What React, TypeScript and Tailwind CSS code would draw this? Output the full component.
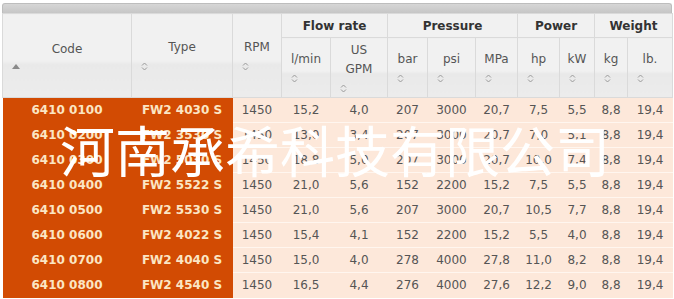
import React from "react";

const rows = [
  ["6410 0100", "FW2 4030 S", "1450", "15,2", "4,0", "207", "3000", "20,7", "7,5", "5,5", "8,8", "19,4"],
  ["6410 0200", "FW2 3530 S", "1450", "13,0", "3,4", "207", "3000", "20,7", "7,0", "5,1", "8,8", "19,4"],
  ["6410 0300", "FW2 5030 S", "1450", "18,8", "5,0", "207", "3000", "20,7", "10,0", "7,4", "8,8", "19,4"],
  ["6410 0400", "FW2 5522 S", "1450", "21,0", "5,6", "152", "2200", "15,2", "7,5", "5,5", "8,8", "19,4"],
  ["6410 0500", "FW2 5530 S", "1450", "21,0", "5,6", "207", "3000", "20,7", "10,5", "7,7", "8,8", "19,4"],
  ["6410 0600", "FW2 4022 S", "1450", "15,4", "4,1", "152", "2200", "15,2", "5,5", "4,0", "8,8", "19,4"],
  ["6410 0700", "FW2 4040 S", "1450", "15,0", "4,0", "278", "4000", "27,8", "11,0", "8,2", "8,8", "19,4"],
  ["6410 0800", "FW2 4540 S", "1450", "16,5", "4,4", "276", "4000", "27,6", "12,2", "9,0", "8,8", "19,4"],
];

const widths = [129, 101, 49, 49, 57, 40, 48, 42, 42, 35, 33, 45];

const SortIcon = () => (
  <svg width="7" height="9" viewBox="0 0 7 9" className="block">
    <path d="M1 3.5 L3.5 1 L6 3.5 M1 5.5 L3.5 8 L6 5.5" fill="none" stroke="#9a9a9a" strokeWidth="1" />
  </svg>
);

const AscIcon = () => (
  <svg width="8" height="5" viewBox="0 0 8 5" className="block">
    <path d="M0 5 L4 0 L8 5 Z" fill="#8a8a8a" />
  </svg>
);

const SubHead = ({ label, asc, span }: { label: React.ReactNode; asc?: boolean; span?: boolean }) => (
  <th
    rowSpan={span ? 2 : 1}
    className="border border-[#dadada] font-normal text-[#555] align-middle px-0 bg-[linear-gradient(#f1f1f1_0%,#f1f1f1_55%,#e9e9e9_60%,#ececec_100%)]"
  >
    <div className="leading-[19px] text-center px-1">{label}</div>
    <div className="pl-[9px] pt-[5px] pb-[2px]">{asc ? <AscIcon /> : <SortIcon />}</div>
  </th>
);

const GroupHead = ({ label, span }: { label: string; span: number }) => (
  <th
    colSpan={span}
    className="border border-[#dadada] bg-[#f1f1f1] font-bold text-[#333] h-[24px] text-center"
  >
    {label}
  </th>
);

export default function App() {
  return (
    <div className="w-[674px] h-[299px] bg-white overflow-hidden relative font-['DejaVu_Sans',sans-serif] text-[12px]">
      <div className="mx-[2px] mt-[3px] h-[10px] rounded-t-[3px] bg-[linear-gradient(#d6d6d6,#c6c6c6)] border border-b-0 border-[#bdbdbd]" />
      <table className="table-fixed border-collapse ml-[2px] w-[670px]">
        <colgroup>
          {widths.map((w, i) => (
            <col key={i} style={{ width: w }} />
          ))}
        </colgroup>
        <thead>
          <tr>
            <SubHead label="Code" asc span />
            <SubHead label="Type" span />
            <SubHead label="RPM" span />
            <GroupHead label="Flow rate" span={2} />
            <GroupHead label="Pressure" span={3} />
            <GroupHead label="Power" span={2} />
            <GroupHead label="Weight" span={2} />
          </tr>
          <tr className="h-[60px]">
            <SubHead label="l/min" />
            <SubHead label={<>US<br />GPM</>} />
            <SubHead label="bar" />
            <SubHead label="psi" />
            <SubHead label="MPa" />
            <SubHead label="hp" />
            <SubHead label="kW" />
            <SubHead label="kg" />
            <SubHead label="lb." />
          </tr>
        </thead>
        <tbody>
          {rows.map((r, i) => (
            <tr key={i} className="h-[25px]">
              {r.map((c, j) => (
                <td
                  key={j}
                  className={
                    j < 2
                      ? "bg-[#d24b03] text-[#fbe6c4] font-bold text-center p-0"
                      : "bg-[#fde8da] text-[#555] text-center p-0 border-t border-[#fff6ef]"
                  }
                >
                  {c}
                </td>
              ))}
            </tr>
          ))}
        </tbody>
      </table>
      <div className="absolute left-[60px] top-[121px] text-[55px] leading-[55px] text-white whitespace-nowrap font-['Noto_Sans_CJK_SC',sans-serif] pointer-events-none">
        河南承希科技有限公司
      </div>
    </div>
  );
}
